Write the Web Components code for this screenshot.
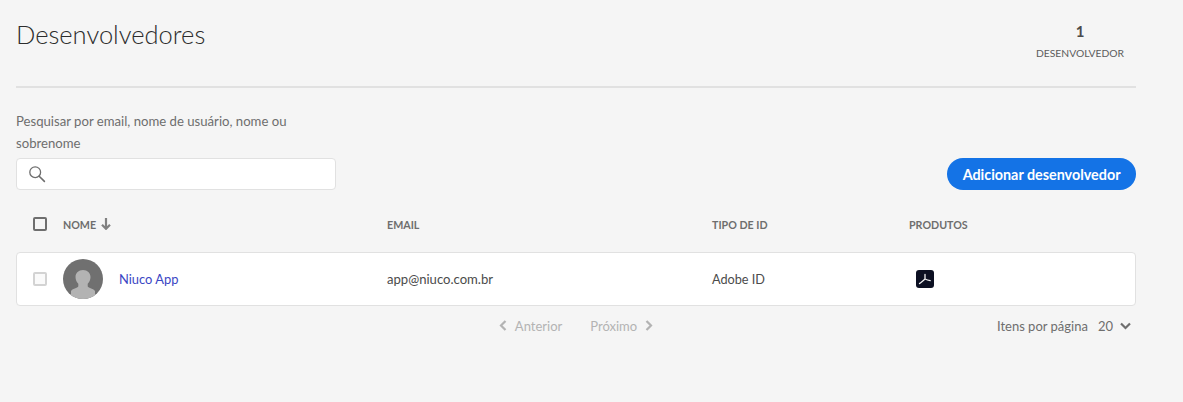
<!DOCTYPE html>
<html lang="pt-BR">
<head>
<meta charset="utf-8">
<title>Desenvolvedores</title>
<style>
  html, body { margin: 0; background: #f5f5f5; }
  body { font-family: Lato, "Noto Sans", sans-serif; color: #4b4b4b; height: 402px; overflow: hidden; }
</style>
</head>
<body>
<dev-page>
  <dev-header title-text="Desenvolvedores" count="1" label="DESENVOLVEDOR"></dev-header>
  <dev-toolbar label="Pesquisar por email, nome de usuário, nome ou sobrenome" action="Adicionar desenvolvedor"></dev-toolbar>
  <dev-table-head></dev-table-head>
  <dev-row name="Niuco App" email="app@niuco.com.br" idtype="Adobe ID"></dev-row>
  <dev-pager></dev-pager>
</dev-page>

<script>
class DevPage extends HTMLElement {
  constructor() {
    super();
    this.attachShadow({ mode: "open" });
    this.shadowRoot.innerHTML = `
      <style>
        :host { display: block; width: 1120px; margin-left: 16px; }
      </style>
      <slot></slot>`;
  }
}

class DevHeader extends HTMLElement {
  constructor() {
    super();
    this.attachShadow({ mode: "open" });
    this.shadowRoot.innerHTML = `
      <style>
        :host { display: flex; justify-content: space-between; height: 88px; box-sizing: border-box; border-bottom: 2px solid #e1e1e1; }
        h1 { margin: 17px 0 0; font-size: 25.5px; line-height: 34px; font-weight: 300; color: #2c2c2c; }
        .stat { width: 112px; text-align: center; padding-top: 22px; }
        .num { font-size: 15px; line-height: 18px; font-weight: 700; color: #4b4b4b; }
        .label { font-size: 10.3px; line-height: 14px; margin-top: 6px; color: #5c5c5c; }
      </style>
      <h1></h1>
      <div class="stat"><div class="num"></div><div class="label"></div></div>`;
    this.shadowRoot.querySelector("h1").textContent = this.getAttribute("title-text");
    this.shadowRoot.querySelector(".num").textContent = this.getAttribute("count");
    this.shadowRoot.querySelector(".label").textContent = this.getAttribute("label");
  }
}

class DevToolbar extends HTMLElement {
  constructor() {
    super();
    this.attachShadow({ mode: "open" });
    this.shadowRoot.innerHTML = `
      <style>
        :host { display: flex; justify-content: space-between; align-items: flex-end; margin-top: 16px; height: 86px; }
        .search { width: 320px; }
        label { display: block; font-size: 13.15px; line-height: 22px; color: #6e6e6e; margin-bottom: 4px; }
        .box { height: 32px; box-sizing: border-box; background: #fff; border: 1px solid #e1e1e1; border-radius: 4px; display: flex; align-items: center; padding-left: 11px; }
        svg { display: block; }
        button { height: 32px; padding: 0 15.5px; border: 0; border-radius: 16px; background: #1473e6; color: #fff; font: 700 14.35px Lato, "Noto Sans", sans-serif; }
      </style>
      <div class="search">
        <label></label>
        <div class="box">
          <svg width="18" height="18" viewBox="0 0 18 18" fill="none" stroke="#6e6e6e" stroke-width="1.3">
            <circle cx="7.2" cy="7.2" r="5.4"></circle>
            <path d="M11.2 11.2 16.4 16.4" stroke-width="1.6" stroke-linecap="round"></path>
          </svg>
        </div>
      </div>
      <button></button>`;
    this.shadowRoot.querySelector("label").textContent = this.getAttribute("label");
    this.shadowRoot.querySelector("button").textContent = this.getAttribute("action");
  }
}

class DevCheckbox extends HTMLElement {
  constructor() {
    super();
    this.attachShadow({ mode: "open" });
    this.shadowRoot.innerHTML = `
      <style>
        :host { display: block; width: 14px; height: 14px; box-sizing: border-box; border: 2px solid var(--check-color, #6e6e6e); border-radius: 2px; background: var(--check-bg, transparent); }
      </style>`;
  }
}

const columns = "grid-template-columns: 30px 324px 325px 197px 1fr;";

class DevTableHead extends HTMLElement {
  constructor() {
    super();
    this.attachShadow({ mode: "open" });
    this.shadowRoot.innerHTML = `
      <style>
        :host { display: grid; ${columns} align-items: center; height: 62px; box-sizing: border-box; padding: 6px 0 0 17px; font-size: 10.7px; font-weight: 700; color: #6e6e6e; }
        .sort { display: flex; align-items: center; gap: 5px; }
        svg { display: block; }
      </style>
      <dev-checkbox></dev-checkbox>
      <div class="sort">NOME
        <svg width="10" height="12" viewBox="0 0 10 12" fill="none" stroke="#808080" stroke-width="2.2">
          <path d="M5 0V10.5M1 6.8 5 10.8 9 6.8"></path>
        </svg>
      </div>
      <div>EMAIL</div>
      <div>TIPO DE ID</div>
      <div>PRODUTOS</div>`;
  }
}

class DevRow extends HTMLElement {
  constructor() {
    super();
    this.attachShadow({ mode: "open" });
    this.shadowRoot.innerHTML = `
      <style>
        :host { display: grid; ${columns} align-items: center; height: 54px; box-sizing: border-box; padding-left: 16px; background: #fff; border: 1px solid #e1e1e1; border-radius: 4px; font-size: 13.1px; color: #4b4b4b; --check-color: #d3d3d3; --check-bg: #fafafa; }
        .user { display: flex; align-items: center; gap: 16px; }
        .name { font-size: 12.9px; }
        .idtype { font-size: 12.7px; }
        a { color: #3b46c4; text-decoration: none; }
        svg { display: block; }
      </style>
      <dev-checkbox></dev-checkbox>
      <div class="user">
        <svg width="40" height="40" viewBox="0 0 40 40">
          <defs><clipPath id="disc"><circle cx="20" cy="20" r="20"></circle></clipPath></defs>
          <circle cx="20" cy="20" r="20" fill="#707070"></circle>
          <g clip-path="url(#disc)" fill="#b3b3b3">
            <path d="M20 11c4.4 0 7.5 3 7.5 7 0 3-1.300 5.200-2.800 6.800v2.500c0 1.500 5.300 2 7.300 4.700V41H8v-9c2-2.700 7.300-3.200 7.300-4.700v-2.500c-1.500-1.600-2.800-3.800-2.800-6.800 0-4 3.100-7 7.500-7z"></path>
          </g>
        </svg>
        <a href="#" class="name"></a>
      </div>
      <div class="email"></div>
      <div class="idtype"></div>
      <div>
        <svg style="margin-left:7px" width="18" height="18" viewBox="0 0 18 18">
          <rect width="18" height="18" rx="3" fill="#0c1022"></rect>
          <path d="M3.5 13.6C5.400 12 7.400 10.500 9 9M9 4.500V9M9 9c1.700.8 3.400 1.300 5.200 1.600" fill="none" stroke="#f2f2f2" stroke-width="1.3" stroke-linecap="round"></path>
        </svg>
      </div>`;
    this.shadowRoot.querySelector(".name").textContent = this.getAttribute("name");
    this.shadowRoot.querySelector(".email").textContent = this.getAttribute("email");
    this.shadowRoot.querySelector(".idtype").textContent = this.getAttribute("idtype");
  }
}

class DevPager extends HTMLElement {
  constructor() {
    super();
    this.attachShadow({ mode: "open" });
    this.shadowRoot.innerHTML = `
      <style>
        :host { display: grid; grid-template-columns: 1fr auto 1fr; align-items: center; height: 39px; font-size: 13px; }
        .nav { display: flex; align-items: center; gap: 28px; color: #b3b3b3; grid-column: 2; }
        .nav span { display: flex; align-items: center; gap: 8px; }
        .size { grid-column: 3; justify-self: end; display: flex; align-items: center; color: #6e6e6e; margin-right: 5px; }
        .size b { font-weight: 400; margin: 0 7px 0 10px; }
        svg { display: block; }
      </style>
      <div class="nav">
        <span>
          <svg width="8" height="11" viewBox="0 0 8 11" fill="none" stroke="#b3b3b3" stroke-width="2.2"><path d="M6.5 1 2 5.500 6.500 10"></path></svg>
          Anterior
        </span>
        <span>
          Próximo
          <svg width="8" height="11" viewBox="0 0 8 11" fill="none" stroke="#b3b3b3" stroke-width="2.2"><path d="M1.5 1 6 5.500 1.500 10"></path></svg>
        </span>
      </div>
      <div class="size">Itens por página<b>20</b>
        <svg width="11" height="8" viewBox="0 0 11 8" fill="none" stroke="#6e6e6e" stroke-width="2.2"><path d="M1 1.500 5.500 6 10 1.500"></path></svg>
      </div>`;
  }
}

customElements.define("dev-page", DevPage);
customElements.define("dev-header", DevHeader);
customElements.define("dev-toolbar", DevToolbar);
customElements.define("dev-checkbox", DevCheckbox);
customElements.define("dev-table-head", DevTableHead);
customElements.define("dev-row", DevRow);
customElements.define("dev-pager", DevPager);
</script>
</body>
</html>
